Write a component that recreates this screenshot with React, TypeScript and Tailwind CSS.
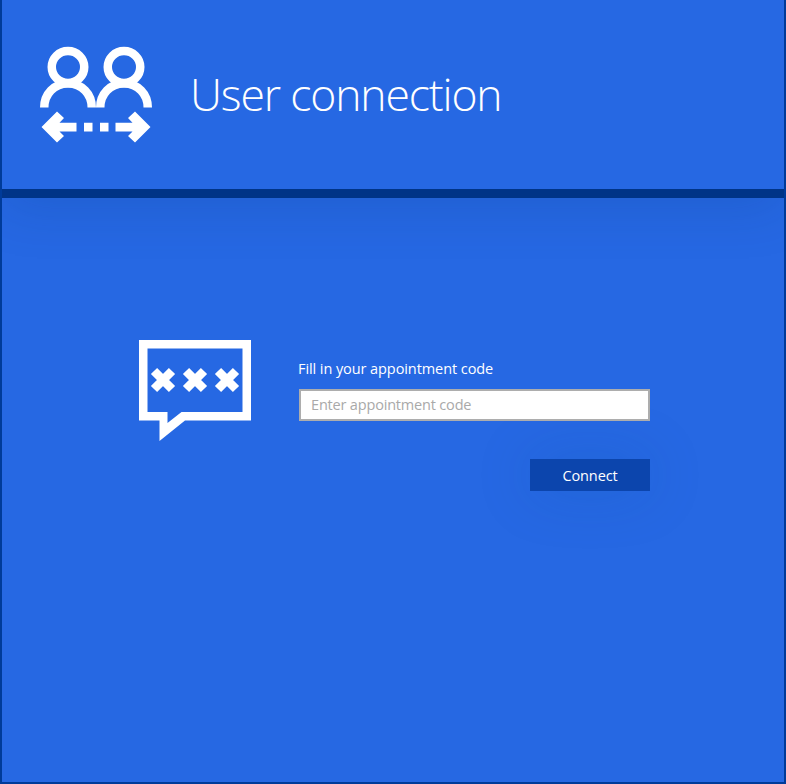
import React from "react";

function PeopleIcon() {
  return (
    <svg width="112" height="98" viewBox="0 0 112 98" fill="none" stroke="#fff" className="block shrink-0">
      <g strokeWidth="8.500">
        <ellipse cx="28" cy="21" rx="16.250" ry="16" />
        <ellipse cx="84" cy="21" rx="16.250" ry="16" />
        <path d="M4.250 61.500C4.250 48 14 37.500 28 37.500S51.750 48 51.750 61.500" />
        <path d="M60.250 61.500C60.250 48 70 37.500 84 37.500S107.750 48 107.750 61.500" />
      </g>
      <g fill="#fff" stroke="none">
        <path d="M1.500 81L17 65.500L24 72L19.500 76.800H36.500V85.500H19.500L24 90L17 96.500Z" />
        <path d="M110.500 81L95 65.500L88 72L92.500 76.800H75.500V85.500H92.500L88 90L95 96.500Z" />
        <path d="M44 76.800H52.500V85.500H44ZM60 76.800H68.500V85.500H60Z" />
      </g>
    </svg>
  );
}

function CodeIcon() {
  return (
    <svg width="112" height="102" viewBox="0 0 112 102" className="block shrink-0">
      <path
        fill="#fff"
        fillRule="evenodd"
        d="M0 0H112V80.500H46L20.500 101V80.500H0ZM8.500 8.500V72H28.500V83L42.500 72H103.500V8.500Z"
      />
      <path
        d="M15 31L33 49M33 31L15 49M47 31L65 49M65 31L47 49M79 31L97 49M97 31L79 49"
        stroke="#fff"
        strokeWidth="8.800"
      />
    </svg>
  );
}

export default function App() {
  return (
    <div className="flex h-[784px] w-[786px] flex-col overflow-hidden border-x-2 border-b-2 border-[#003b99] bg-[#2668e3] font-['Open_Sans','Noto_Sans',sans-serif] text-white">
      <header className="flex h-[198px] shrink-0 items-start border-b-[9px] border-[#003487] pt-[46px] pl-[38px] shadow-[0_10px_50px_rgba(0,50,110,0.16)]">
        <PeopleIcon />
        <h1 className="mt-[17px] ml-[38px] text-[44.500px] leading-[62px] font-light tracking-[-1.15px] whitespace-nowrap">
          User connection
        </h1>
      </header>
      <main className="flex items-start pt-[142px] pl-[137px]">
        <CodeIcon />
        <form className="ml-[48px] flex w-[351px] flex-col pt-[18px]" onSubmit={(e) => e.preventDefault()}>
          <label htmlFor="code" className="-ml-px text-[14.500px] leading-[22px] tracking-[-0.08px]">
            Fill in your appointment code
          </label>
          <input
            id="code"
            className="relative z-10 mt-[9px] h-8 w-full border-2 border-[#adadad] bg-white px-[10px] pb-[2px] text-[14.500px] tracking-[-0.18px] text-black placeholder:text-[#a9a9a9]"
            placeholder="Enter appointment code"
          />
          <button className="mt-[38px] h-8 w-[120px] self-end bg-[#0c45ad] pt-[2px] text-[14.500px] tracking-[-0.1px] shadow-[0_0_60px_rgba(0,80,150,0.2)]">
            Connect
          </button>
        </form>
      </main>
    </div>
  );
}
